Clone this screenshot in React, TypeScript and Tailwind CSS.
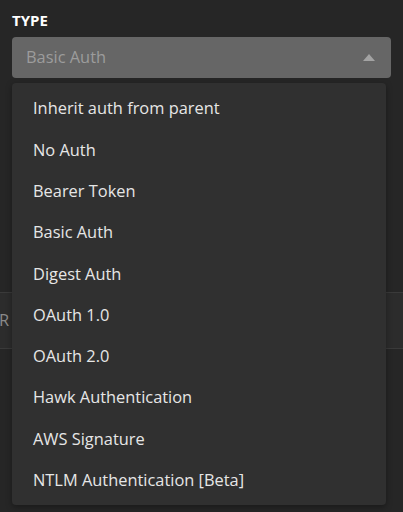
import React from "react";

const items = [
  "Inherit auth from parent",
  "No Auth",
  "Bearer Token",
  "Basic Auth",
  "Digest Auth",
  "OAuth 1.0",
  "OAuth 2.0",
  "Hawk Authentication",
  "AWS Signature",
  "NTLM Authentication [Beta]",
];

export default function App() {
  return (
    <div
      className="relative w-[403px] h-[512px] overflow-hidden bg-[#262626]"
      style={{ fontFamily: '"Open Sans", sans-serif' }}
    >
      <div className="pt-[11px] px-[12px]">
        <div className="text-[15px] font-bold leading-[18px] text-white">TYPE</div>
        <div className="mt-[8px] h-[41px] rounded-[4px] bg-[#666666] flex items-center justify-between pl-[14px] pr-[16px]">
          <span className="text-[16.4px] text-[#9c9c9c]">Basic Auth</span>
          <svg width="12" height="7" viewBox="0 0 12 7">
            <polygon points="6,0 12,7 0,7" fill="#a3a3a3" />
          </svg>
        </div>
      </div>
      <div className="mt-[214px] h-[57px] border-y border-[#3a3a3a] bg-[#2c2c2c] flex items-center">
        <span className="text-[16.4px] text-[#8a8a8a] -ml-[1px]">R</span>
      </div>

      <div className="absolute left-[12px] top-[83px] w-[374px] rounded-[4px] bg-[#303030] pt-[5px] pb-[4px] shadow-[0_2px_6px_rgba(0,0,0,0.35)]">
        {items.map((it) => (
          <div key={it} className="h-[41.3px] flex items-center pl-[21px] text-[16.4px] text-[#e6e6e6]">
            {it}
          </div>
        ))}
      </div>
    </div>
  );
}
